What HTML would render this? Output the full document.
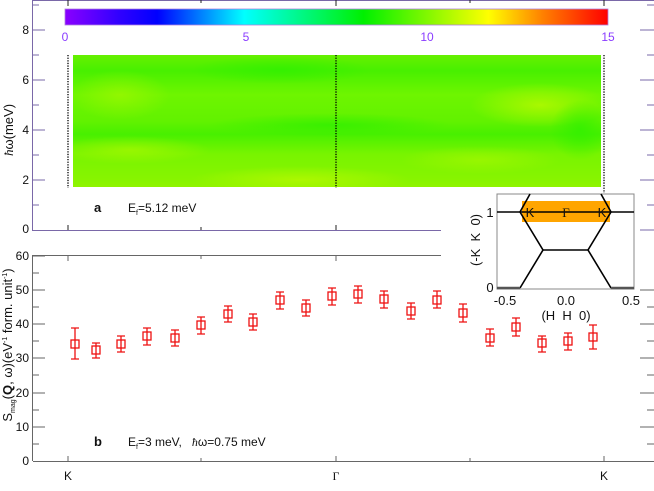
<!DOCTYPE html>
<html><head><meta charset="utf-8"><style>
html,body{margin:0;padding:0;background:#fff;}
svg{display:block;font-family:"Liberation Sans",sans-serif;}
</style></head><body>
<svg width="654" height="491" viewBox="0 0 654 491" xmlns="http://www.w3.org/2000/svg">
<defs>
<linearGradient id="cb" x1="0" x2="1" y1="0" y2="0">
<stop offset="0" stop-color="#8a00ff"/><stop offset="0.1" stop-color="#3000ff"/><stop offset="0.17" stop-color="#0000ff"/>
<stop offset="0.33" stop-color="#00ffff"/><stop offset="0.55" stop-color="#00f000"/><stop offset="0.78" stop-color="#ffff00"/>
<stop offset="0.88" stop-color="#ff8000"/><stop offset="1" stop-color="#ff0000"/></linearGradient>
<linearGradient id="hv" x1="0" x2="0" y1="0" y2="1">
<stop offset="0" stop-color="#66f000"/><stop offset="0.12" stop-color="#48f000"/><stop offset="0.3" stop-color="#6ef500"/>
<stop offset="0.5" stop-color="#62f200"/><stop offset="0.6" stop-color="#48f000"/><stop offset="0.75" stop-color="#78f400"/>
<stop offset="0.95" stop-color="#88f400"/><stop offset="1" stop-color="#90f400"/></linearGradient>
<radialGradient id="y1" cx="0.5" cy="0.5" r="0.5"><stop offset="0" stop-color="#b0f800" stop-opacity="0.9"/><stop offset="1" stop-color="#b0f800" stop-opacity="0"/></radialGradient>
<radialGradient id="g1" cx="0.5" cy="0.5" r="0.5"><stop offset="0" stop-color="#30f000" stop-opacity="0.8"/><stop offset="1" stop-color="#30f000" stop-opacity="0"/></radialGradient>
<clipPath id="hc"><rect x="73" y="55" width="528" height="132"/></clipPath>
</defs>
<rect x="65" y="9" width="543" height="16" fill="url(#cb)" stroke="#b080e0" stroke-width="0.8"/>
<g fill="#8a3cff" font-size="12" text-anchor="middle">
<text x="65" y="41">0</text><text x="246" y="41">5</text><text x="427" y="41">10</text><text x="608" y="41">15</text></g>
<g clip-path="url(#hc)">
<rect x="73" y="55" width="528" height="132" fill="url(#hv)"/>
<ellipse cx="540" cy="105" rx="70" ry="22" fill="url(#y1)"/>
<ellipse cx="120" cy="95" rx="50" ry="25" fill="url(#y1)" opacity="0.6"/>
<ellipse cx="300" cy="180" rx="110" ry="14" fill="url(#y1)"/>
<ellipse cx="130" cy="150" rx="80" ry="14" fill="url(#y1)" opacity="0.7"/>
<ellipse cx="480" cy="160" rx="80" ry="14" fill="url(#y1)" opacity="0.6"/>
<ellipse cx="330" cy="125" rx="120" ry="12" fill="url(#g1)"/>
<ellipse cx="280" cy="70" rx="90" ry="14" fill="url(#g1)"/>
<ellipse cx="580" cy="130" rx="30" ry="30" fill="url(#g1)"/>
</g>
<g stroke="#000" stroke-width="1.3" stroke-dasharray="1.3,1.3">
<line x1="68" y1="55" x2="68" y2="188"/><line x1="336" y1="55" x2="336" y2="188"/><line x1="604" y1="55" x2="604" y2="193"/></g>
<g stroke="#7a68a8" stroke-width="1">
<line x1="33" y1="0.5" x2="654" y2="0.5"/>
<line x1="32.5" y1="0" x2="32.5" y2="231"/>
<line x1="33" y1="230.5" x2="441" y2="230.5"/>
<line x1="33" y1="30" x2="45" y2="30"/><line x1="33" y1="80" x2="45" y2="80"/><line x1="33" y1="130" x2="45" y2="130"/><line x1="33" y1="180" x2="45" y2="180"/>
<line x1="33" y1="5" x2="39" y2="5"/><line x1="33" y1="55" x2="39" y2="55"/><line x1="33" y1="105" x2="39" y2="105"/><line x1="33" y1="155" x2="39" y2="155"/><line x1="33" y1="205" x2="39" y2="205"/>
<line x1="640" y1="30" x2="654" y2="30"/><line x1="640" y1="80" x2="654" y2="80"/><line x1="640" y1="130" x2="654" y2="130"/><line x1="640" y1="180" x2="654" y2="180"/><line x1="640" y1="230" x2="654" y2="230"/>
<line x1="647" y1="5" x2="654" y2="5"/><line x1="647" y1="55" x2="654" y2="55"/><line x1="647" y1="105" x2="654" y2="105"/><line x1="647" y1="155" x2="654" y2="155"/><line x1="647" y1="205" x2="654" y2="205"/>
</g>
<g stroke="#222" stroke-width="1"><line x1="68" y1="0" x2="68" y2="6"/><line x1="336" y1="0" x2="336" y2="6"/><line x1="604" y1="0" x2="604" y2="6"/><line x1="201" y1="0" x2="201" y2="3"/><line x1="470" y1="0" x2="470" y2="3"/>
<line x1="68" y1="230" x2="68" y2="225"/><line x1="201" y1="230" x2="201" y2="227"/><line x1="336" y1="230" x2="336" y2="225"/></g>
<g font-size="12" fill="#111" text-anchor="end">
<text x="29" y="34">8</text><text x="29" y="84">6</text><text x="29" y="134">4</text><text x="29" y="184">2</text><text x="29" y="233">0</text></g>
<text transform="translate(13,130) rotate(-90)" font-size="13" fill="#111" text-anchor="middle"><tspan font-family="Liberation Serif" font-style="italic">ħ</tspan>ω(meV)</text>
<text x="94" y="212" font-size="13" font-weight="bold" fill="#111">a</text>
<text x="128" y="212" font-size="12" fill="#111">E<tspan font-size="7" dy="3">f</tspan><tspan dy="-3">=5.12 meV</tspan></text>
<g stroke="#666" stroke-width="1">
<line x1="32.5" y1="255" x2="32.5" y2="461"/>
<line x1="33" y1="255.5" x2="441" y2="255.5"/>
<line x1="33" y1="461.5" x2="654" y2="461.5"/>
<line x1="33" y1="256" x2="45" y2="256"/><line x1="33" y1="290" x2="45" y2="290"/><line x1="33" y1="324" x2="45" y2="324"/><line x1="33" y1="358" x2="45" y2="358"/><line x1="33" y1="393" x2="45" y2="393"/><line x1="33" y1="427" x2="45" y2="427"/>
<line x1="33" y1="273" x2="39" y2="273"/><line x1="33" y1="307" x2="39" y2="307"/><line x1="33" y1="341" x2="39" y2="341"/><line x1="33" y1="375" x2="39" y2="375"/><line x1="33" y1="410" x2="39" y2="410"/><line x1="33" y1="444" x2="39" y2="444"/>
<line x1="640" y1="290" x2="654" y2="290"/><line x1="640" y1="324" x2="654" y2="324"/><line x1="640" y1="358" x2="654" y2="358"/><line x1="640" y1="393" x2="654" y2="393"/><line x1="640" y1="427" x2="654" y2="427"/>
<line x1="647" y1="307" x2="654" y2="307"/><line x1="647" y1="341" x2="654" y2="341"/><line x1="647" y1="375" x2="654" y2="375"/><line x1="647" y1="410" x2="654" y2="410"/><line x1="647" y1="444" x2="654" y2="444"/>
<line x1="68" y1="256" x2="68" y2="261"/><line x1="201" y1="256" x2="201" y2="259"/><line x1="336" y1="256" x2="336" y2="261"/>
<line x1="68" y1="461" x2="68" y2="456"/><line x1="201" y1="461" x2="201" y2="458"/><line x1="336" y1="461" x2="336" y2="456"/><line x1="470" y1="461" x2="470" y2="458"/><line x1="604" y1="461" x2="604" y2="456"/>
</g>
<g font-size="12" fill="#111" text-anchor="end">
<text x="29" y="260">60</text><text x="29" y="294">50</text><text x="29" y="328">40</text><text x="29" y="362">30</text><text x="29" y="397">20</text><text x="29" y="431">10</text><text x="29" y="465">0</text></g>
<text transform="translate(12,345) rotate(-90)" font-size="13" fill="#111" text-anchor="middle">S<tspan font-size="7" dy="3">mag</tspan><tspan dy="-3">(</tspan><tspan font-weight="bold">Q</tspan>, ω)(eV<tspan font-size="7" dy="-5">-1</tspan><tspan dy="5"> form. unit</tspan><tspan font-size="7" dy="-5">-1</tspan><tspan dy="5">)</tspan></text>
<text x="94" y="446" font-size="13" font-weight="bold" fill="#111">b</text>
<text x="128" y="446" font-size="12" fill="#111">E<tspan font-size="7" dy="3">f</tspan><tspan dy="-3">=3 meV,&#160;&#160;&#160;</tspan><tspan font-family="Liberation Serif" font-style="italic">ħ</tspan>ω=0.75 meV</text>
<g font-size="12" fill="#111" text-anchor="middle"><text x="68" y="480">K</text><text x="336" y="480" font-family="Liberation Serif">Γ</text><text x="604" y="480">K</text></g>
<g stroke="#ee1111" stroke-width="1.3" fill="none">
<path d="M75 328V359M71 328h8M71 359h8"/><rect x="71" y="340" width="8" height="8"/>
<path d="M96 343V358M92 343h8M92 358h8"/><rect x="92" y="346" width="8" height="8"/>
<path d="M121 336V352M117 336h8M117 352h8"/><rect x="117" y="340" width="8" height="8"/>
<path d="M147 328V345M143 328h8M143 345h8"/><rect x="143" y="332" width="8" height="8"/>
<path d="M175 330V346M171 330h8M171 346h8"/><rect x="171" y="334" width="8" height="8"/>
<path d="M201 317V334M197 317h8M197 334h8"/><rect x="197" y="321" width="8" height="8"/>
<path d="M228 306V322M224 306h8M224 322h8"/><rect x="224" y="310" width="8" height="8"/>
<path d="M253 314V330M249 314h8M249 330h8"/><rect x="249" y="318" width="8" height="8"/>
<path d="M280 292V309M276 292h8M276 309h8"/><rect x="276" y="296" width="8" height="8"/>
<path d="M306 300V316M302 300h8M302 316h8"/><rect x="302" y="304" width="8" height="8"/>
<path d="M332 288V305M328 288h8M328 305h8"/><rect x="328" y="292" width="8" height="8"/>
<path d="M358 286V303M354 286h8M354 303h8"/><rect x="354" y="290" width="8" height="8"/>
<path d="M384 291V308M380 291h8M380 308h8"/><rect x="380" y="295" width="8" height="8"/>
<path d="M411 303V319M407 303h8M407 319h8"/><rect x="407" y="307" width="8" height="8"/>
<path d="M437 291V308M433 291h8M433 308h8"/><rect x="433" y="296" width="8" height="8"/>
<path d="M463 304V322M459 304h8M459 322h8"/><rect x="459" y="309" width="8" height="8"/>
<path d="M490 329V346M486 329h8M486 346h8"/><rect x="486" y="334" width="8" height="8"/>
<path d="M516 318V336M512 318h8M512 336h8"/><rect x="512" y="323" width="8" height="8"/>
<path d="M542 336V352M538 336h8M538 352h8"/><rect x="538" y="339" width="8" height="8"/>
<path d="M568 333V350M564 333h8M564 350h8"/><rect x="564" y="337" width="8" height="8"/>
<path d="M593 325V349M589 325h8M589 349h8"/><rect x="589" y="333" width="8" height="8"/>
</g>
<rect x="497" y="194" width="137" height="95" fill="#fff" stroke="#888" stroke-width="1"/>
<rect x="522" y="201" width="88" height="21" fill="#ffa500"/>
<g stroke="#000" stroke-width="1.6" fill="none">
<line x1="497" y1="212" x2="634" y2="212"/>
<path d="M530 194L520 212L543 250L520 288"/>
<path d="M601 194L611 212L588 250L611 288"/>
<line x1="543" y1="250" x2="588" y2="250"/>
<line x1="497" y1="288" x2="520" y2="288" stroke="#555" stroke-width="2.5"/>
<line x1="611" y1="288" x2="634" y2="288" stroke="#555" stroke-width="2.5"/>
</g>
<g font-size="13" fill="#111" text-anchor="middle">
<text x="530" y="217">K</text><text x="566" y="217" font-family="Liberation Serif">Γ</text><text x="602" y="217">K</text>
<text x="490" y="217">1</text><text x="490" y="292">0</text>
<text x="505" y="305">-0.5</text><text x="566" y="305">0.0</text><text x="631" y="305">0.5</text>
<text x="566" y="320" xml:space="preserve">(H  H  0)</text>
<text transform="translate(480,240) rotate(-90)" xml:space="preserve">(-K  K  0)</text>
</g>
</svg>
</body></html>
